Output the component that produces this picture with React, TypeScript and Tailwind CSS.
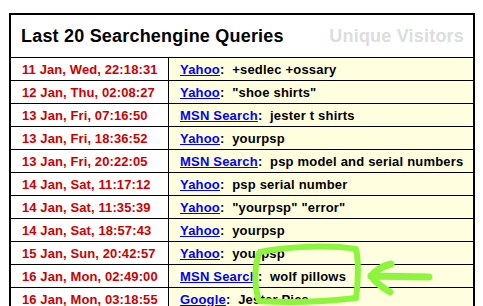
import React from 'react';

interface Query {
  when: string;
  engine: string;
  terms: string;
}

const queries: Query[] = [
  { when: '11 Jan, Wed, 22:18:31', engine: 'Yahoo', terms: '+sedlec +ossary' },
  { when: '12 Jan, Thu, 02:08:27', engine: 'Yahoo', terms: '"shoe shirts"' },
  { when: '13 Jan, Fri, 07:16:50', engine: 'MSN Search', terms: 'jester t shirts' },
  { when: '13 Jan, Fri, 18:36:52', engine: 'Yahoo', terms: 'yourpsp' },
  { when: '13 Jan, Fri, 20:22:05', engine: 'MSN Search', terms: 'psp model and serial numbers' },
  { when: '14 Jan, Sat, 11:17:12', engine: 'Yahoo', terms: 'psp serial number' },
  { when: '14 Jan, Sat, 11:35:39', engine: 'Yahoo', terms: '"yourpsp" "error"' },
  { when: '14 Jan, Sat, 18:57:43', engine: 'Yahoo', terms: 'yourpsp' },
  { when: '15 Jan, Sun, 20:42:57', engine: 'Yahoo', terms: 'yourpsp' },
  { when: '16 Jan, Mon, 02:49:00', engine: 'MSN Search', terms: 'wolf pillows' },
  { when: '16 Jan, Mon, 03:18:55', engine: 'Google', terms: 'Jester Pics' },
];

export default function App() {
  return (
    <div className="relative h-[306px] w-[483px] overflow-hidden bg-white pl-[9px] pt-[13px] font-['Liberation_Sans',Arial,sans-serif] font-bold">
      <div className="w-[466px] border-2 border-black">
        {/* header */}
        <div className="flex h-[42px] items-center justify-between pl-[10px] pr-[9px] tracking-[0.2px]">
          <span className="text-[18px] text-black">Last 20 Searchengine Queries</span>
          <span className="text-[18px] text-[#dddddd]">Unique Visitors</span>
        </div>

        {queries.map((q) => (
          <div key={q.when} className="flex h-[23px] border-t border-black text-[13px] leading-none">
            <div className="flex w-[158px] items-center border-r border-black pl-[11px] tracking-[0.1px] text-[#cc0000]">
              {q.when}
            </div>
            <div className="flex flex-1 items-center bg-[#ffffe0] pl-[11px] tracking-[0.2px] text-black whitespace-pre">
              <a href="#" className="text-[#0000ff] underline">{q.engine}</a>
              <span>{':  ' + q.terms}</span>
            </div>
          </div>
        ))}
      </div>

      {/* green highlight scribble */}
      <svg className="pointer-events-none absolute left-0 top-0" width="483" height="306" viewBox="0 0 483 306">
        <path
          d="M260 252 C290 246 330 245 356 249 C359 262 358 284 356 298 C330 301 290 303 259 301 C254 285 254 265 260 252 Z"
          fill="none"
          stroke="#8cf53c"
          strokeWidth="6"
          strokeLinecap="round"
          strokeLinejoin="round"
        />
        <path
          d="M371 276 L429 277 M371 276 C377 269 383 266 391 264 M371 276 C377 284 383 288 390 292"
          fill="none"
          stroke="#8cf53c"
          strokeWidth="7"
          strokeLinecap="round"
        />
      </svg>
    </div>
  );
}
